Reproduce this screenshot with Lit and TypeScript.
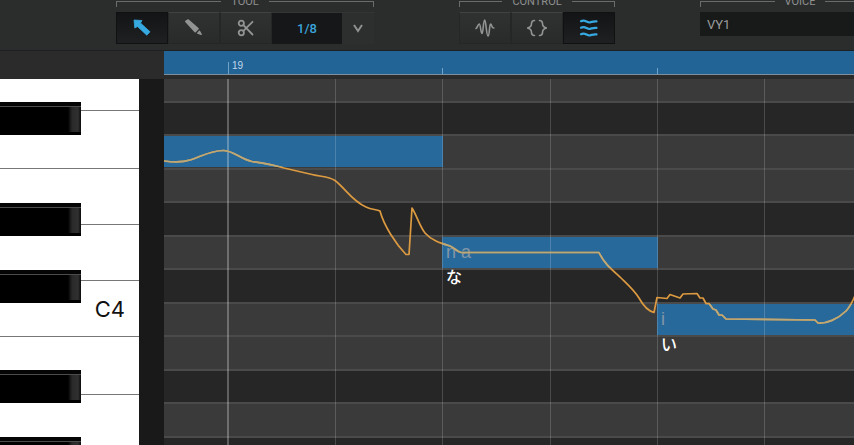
import { LitElement, html, svg, css } from "lit";
import { customElement, state } from "lit/decorators.js";
import { classMap } from "lit/directives/class-map.js";
import { styleMap } from "lit/directives/style-map.js";

type Note = { left: number; width: number; top: number; phoneme: string; lyric: string };

const LANES = [
  { h: 24, black: false }, { h: 33, black: true }, { h: 34, black: false }, { h: 33, black: false },
  { h: 34, black: true }, { h: 33, black: false }, { h: 34, black: true }, { h: 33, black: false },
  { h: 34, black: false }, { h: 33, black: true }, { h: 34, black: false }, { h: 33, black: true },
];
const WHITE_KEYS = [
  { h: 32, label: "" }, { h: 58, label: "" }, { h: 56, label: "" }, { h: 56, label: "" },
  { h: 56, label: "C4" }, { h: 58, label: "" }, { h: 58, label: "" },
];
const BLACK_KEYS = [23, 124, 191, 291, 358];
const BEATS = [171, 278, 386, 493, 600];
const NOTES: Note[] = [
  { left: 0, width: 279, top: 57, phoneme: "", lyric: "" },
  { left: 278, width: 216, top: 158, phoneme: "n a", lyric: "な" },
  { left: 493, width: 240, top: 225, phoneme: "i", lyric: "い" },
];
const PITCH =
  "M164 161C172 162 184 162 190 160C200 157 212 150 224 150.5C234 151 240 159 252 161.5C262 163 270 164 284 168L312 174.5C322 177 328 176 335 180.5C346 189 352 201 366 207C372 210 376 209 380 211C384 226 396 244 406 254.5L409 254.5L412 208C417 216 420 227 425 233C431 240 440 243 450 246C455 248 457 252 461 252.5L599 252.5C604 263 610 268 620 277C628 285 634 290 639 298C644 307 648 311 654 312.5L657 297.5L667 298.5L670 294.5L680 298L683 294L697 293.5L700 298L703 298L706 303.5L709 303.5L713 309L716 310L719 315L722 315L726 319L815 320L818 323C826 324 838 319 846 311C850 307 852 302 855 296";

const ICONS = {
  select: svg`<path d="M1 1l8 .5-1.500 2.500L17 12.800 13.800 16.200 4.500 7.500 1.800 9z" fill="currentColor" stroke="currentColor" stroke-width=".8" stroke-linejoin="round"/>`,
  pencil: svg`<path d="M.8 2.500L3.200 1 13 9.600 10.200 12.600z" fill="currentColor" stroke="currentColor" stroke-width="1.600" stroke-linejoin="round"/><path d="M12.700 14.200l1.800-1.900 1.700 3z" fill="currentColor" stroke="currentColor" stroke-width="1.400" stroke-linejoin="round"/>`,
  scissors: svg`<g fill="none" stroke="currentColor" stroke-width="1.800" stroke-linecap="round"><circle cx="4.300" cy="4.300" r="2.600"/><circle cx="4.300" cy="13.700" r="2.600"/><path d="M6.400 6.100L15.500 15.500M6.400 11.900L15.500 2.800"/></g>`,
  wave: svg`<path d="M0 9.500C1.500 9 1.800 5 3.200 5S4.800 14.500 6 14.500 7.300 1 8.700 1s1.600 16 3.300 16 1.200-12 2.600-12 .8 4.500 3.200 4" fill="none" stroke="currentColor" stroke-width="1.600" stroke-linecap="round"/>`,
  braces: svg`<path d="M6.500 1.500C4 1.500 3.500 2.500 3.500 4.500 3.500 7 2.500 8.500-.8 9 2.500 9.500 3.500 11 3.500 13.500 3.500 15.500 4 16.500 6.500 16.500M11.500 1.500C14 1.500 14.500 2.500 14.500 4.500c0 2.500 1 4 4.300 4.500-3.300.5-4.300 2-4.300 4.500 0 2-.5 3-3 3" fill="none" stroke="currentColor" stroke-width="1.600" stroke-linecap="round"/>`,
  lines: svg`<path d="M1 2.200c4-2.500 6 2 9 1.200s4-1.400 6.500-1M1 8.700c4-2.500 6 2 9 1.200s4-1.400 6.500-1M1 15.200c4-2.500 6 2 9 1.200s4-1.400 6.500-1" fill="none" stroke="currentColor" stroke-width="2.200" stroke-linecap="round"/>`,
};

@customElement("tool-bar")
class ToolBar extends LitElement {
  @state() private tool = "select";
  @state() private control = "lines";

  static styles = css`
    :host { display: flex; gap: 85px; height: 51px; padding-left: 116px; overflow: hidden; box-sizing: border-box; background: #2b2d2d; border-bottom: 1px solid #1c2022; }
    .group { flex: none; margin-top: -6px; }
    .voice { width: 200px; }
    .caption { display: flex; gap: 10px; height: 12px; margin-bottom: 6px; color: #8f9090; font-size: 11px; line-height: 16px; }
    .caption::before, .caption::after { content: ""; flex: 1; height: 5px; margin-top: 7px; border-top: 1px solid #6a6b6b; }
    .caption::before { border-left: 1px solid #6a6b6b; }
    .caption::after { border-right: 1px solid #6a6b6b; }
    .row { display: flex; height: 32px; }
    button { width: 52px; padding: 0; border: 1px solid #252626; border-top-color: #414242; background: linear-gradient(#303131, #292a2a); color: #929393; display: flex; align-items: center; justify-content: center; }
    button.on { background: linear-gradient(#131415, #1f2021); border-color: #101112; color: #36a9e1; }
    svg { display: block; overflow: visible; }
    select { appearance: none; border: 0; border-radius: 0; margin: 0; font-family: Roboto, "Liberation Sans", sans-serif; outline: 0; }
    .snap { position: relative; display: flex; }
    .snap select { width: 102px; padding: 0 32px 0 0; text-align-last: center; color: #3aa5db; font-size: 13px; font-weight: 500; background: linear-gradient(to right, #161718 70px, #2d2e2e 70px); border-top: 1px solid #333434; }
    .snap svg { position: absolute; right: 11px; top: 13px; pointer-events: none; }
    .voice select { width: 100%; height: 24px; padding: 0 7px; background: #181919; color: #9b9c9c; font-size: 13px; }
  `;

  private button(id: keyof typeof ICONS, label: string, on: boolean, pick: () => void) {
    return html`<button class=${classMap({ on })} aria-label=${label} aria-pressed=${on} @click=${pick}>
      <svg width="18" height="18" viewBox="0 0 18 18" aria-hidden="true">${ICONS[id]}</svg>
    </button>`;
  }

  render() {
    return html`
      <div class="group" role="group" aria-label="Tool">
        <div class="caption">TOOL</div>
        <div class="row">
          ${this.button("select", "Select", this.tool === "select", () => (this.tool = "select"))}
          ${this.button("pencil", "Draw", this.tool === "pencil", () => (this.tool = "pencil"))}
          ${this.button("scissors", "Split", this.tool === "scissors", () => (this.tool = "scissors"))}
          <div class="snap">
            <select aria-label="Quantize"><option>1/8</option></select>
            <svg width="10" height="8" viewBox="0 0 10 8" aria-hidden="true"><path d="M1 0l4 6 4-6" fill="none" stroke="#8f9090" stroke-width="2"/></svg>
          </div>
        </div>
      </div>
      <div class="group" role="group" aria-label="Control">
        <div class="caption">CONTROL</div>
        <div class="row">
          ${this.button("wave", "Vibrato", this.control === "wave", () => (this.control = "wave"))}
          ${this.button("braces", "Phonemes", this.control === "braces", () => (this.control = "braces"))}
          ${this.button("lines", "Pitch curve", this.control === "lines", () => (this.control = "lines"))}
        </div>
      </div>
      <div class="group voice">
        <div class="caption">VOICE</div>
        <select aria-label="Voice"><option>VY1</option></select>
      </div>`;
  }
}

@customElement("piano-keys")
class PianoKeys extends LitElement {
  static styles = css`
    :host { display: block; position: relative; overflow: hidden; background: #fff; }
    .white { box-sizing: border-box; border-bottom: 1px solid #777; display: flex; align-items: center; justify-content: flex-end; padding-right: 14px; color: #111; font: 22px/24px Inter, "Liberation Sans", sans-serif; }
    .black { position: absolute; left: 0; width: 81px; height: 33px; box-sizing: border-box; background: #000; border-top: 4px solid #050505; }
    .black::before { content: ""; display: block; height: 25px; border-top: 1px solid #4c4c4c; background: linear-gradient(to right, #000 68px, #292929 72px, #303030 78px, #0a0a0a 81px); }
  `;
  render() {
    return html`
      ${WHITE_KEYS.map((k) => html`<div class="white" style=${styleMap({ height: `${k.h}px` })}>${k.label}</div>`)}
      ${BLACK_KEYS.map((y) => html`<div class="black" style=${styleMap({ top: `${y}px` })}></div>`)}`;
  }
}

@customElement("piano-roll")
class PianoRoll extends LitElement {
  static styles = css`
    :host { display: block; position: relative; overflow: hidden; background: #262626; }
    .lane { box-sizing: border-box; background: #3a3a3a; border-bottom: 2px solid #4a4a4a; }
    .lane.black { background: #262626; }
    .beat, .bar { position: absolute; top: 0; bottom: 0; width: 1px; background: rgba(255, 255, 255, 0.17); }
    .bar { left: 63px; width: 2px; background: rgba(255, 255, 255, 0.27); }
    .note { position: absolute; height: 31px; background: #28699c; }
    .phoneme { height: 31px; padding-left: 4px; color: #8196a6; font: 18px/30px "Liberation Sans", sans-serif; white-space: pre; }
    .lyric { padding-left: 4px; color: #fff; font: 500 16px/16px "Noto Sans CJK JP", sans-serif; }
    .pitch { position: absolute; left: 0; top: 0; overflow: visible; }
  `;
  render() {
    return html`
      ${LANES.map((l) => html`<div class=${classMap({ lane: true, black: l.black })} style=${styleMap({ height: `${l.h}px` })}></div>`)}
      ${NOTES.map((n) => html`<div class="note" style=${styleMap({ left: `${n.left}px`, top: `${n.top}px`, width: `${n.width}px` })}>
        <div class="phoneme">${n.phoneme}</div><div class="lyric">${n.lyric}</div>
      </div>`)}
      <div class="bar"></div>
      ${BEATS.map((x) => html`<div class="beat" style=${styleMap({ left: `${x}px` })}></div>`)}
      <svg class="pitch" width="690" height="366" viewBox="164 79 690 366" aria-hidden="true">
        <defs><clipPath id="notes">${NOTES.map((n) => svg`<rect x=${n.left + 164} y=${n.top + 79} width=${n.width} height="31"/>`)}</clipPath></defs>
        <path d=${PITCH} fill="none" stroke="#dc9a41" stroke-width="1.700" stroke-linejoin="round"/>
        <path d=${PITCH} fill="none" stroke="#bda877" stroke-width="1.700" stroke-linejoin="round" clip-path="url(#notes)"/>
      </svg>`;
  }
}

@customElement("app-root")
class AppRoot extends LitElement {
  static styles = css`
    :host { display: flex; flex-direction: column; height: 100vh; overflow: hidden; background: #2b2b2b; font-family: Roboto, "Liberation Sans", sans-serif; }
    tool-bar { flex: none; }
    .editor { flex: 1; min-height: 0; display: grid; grid-template: 28px minmax(0, 1fr) / 139px 25px minmax(0, 1fr); }
    .corner { grid-column: span 2; background: #2b2b2b; }
    .ruler { position: relative; box-sizing: border-box; height: 24px; padding: 8px 0 0 68px; background: #236497; border-bottom: 1px solid #7f8f9b; color: #c0d8ea; font: 10px/14px "Liberation Sans", sans-serif; }
    .tick { position: absolute; bottom: 0; width: 1px; height: 6px; background: #6fa3c9; }
    .tick.major { height: 12px; }
    .gutter { background: #191919; }
  `;
  render() {
    const ticks = [64, 278, 493];
    return html`
      <tool-bar></tool-bar>
      <main class="editor">
        <div class="corner"></div>
        <div class="ruler">19${ticks.map((x, i) => html`<span class=${classMap({ tick: true, major: i === 0 })} style=${styleMap({ left: `${x}px` })}></span>`)}</div>
        <piano-keys></piano-keys>
        <div class="gutter"></div>
        <piano-roll></piano-roll>
      </main>`;
  }
}
